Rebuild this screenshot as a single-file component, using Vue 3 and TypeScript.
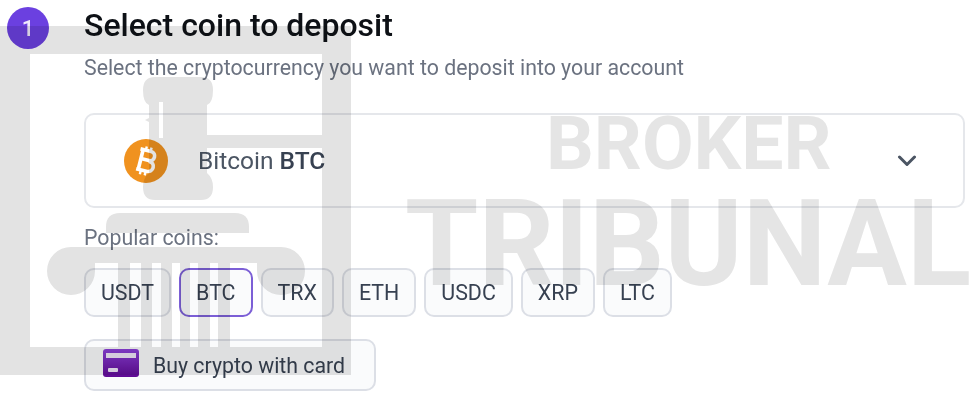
<script setup lang="ts">
const coins = ['USDT', 'BTC', 'TRX', 'ETH', 'USDC', 'XRP', 'LTC'];
const selected = 'BTC';
// columns of the courthouse in the watermark: [x, width]
const columns = [[118, 12], [141, 11], [161, 11], [180, 10], [198, 12], [218, 12]];
</script>

<template>
  <div class="page">
    <main class="content">
      <header class="step">
        <span class="badge">1</span>
        <div>
          <h1>Select coin to deposit</h1>
          <p class="hint">Select the cryptocurrency you want to deposit into your account</p>
        </div>
      </header>

      <div class="body">
        <div class="select">
          <svg class="coin" width="44" height="44" viewBox="0 0 44 44">
            <circle cx="22" cy="22" r="22" fill="#f0921f" />
            <g transform="rotate(14 22 22) translate(22 22) scale(1.1) translate(-22 -22)" fill="none" stroke="#fff">
              <path stroke-width="3.300" stroke-linejoin="round" d="M17 12.500H24.500C30 12.500 30 21 24.500 21H17M24.500 21.500C31.500 21.500 31.500 31 24.500 31H15M17 12.500V31M14.500 12.500H18" />
              <path stroke-width="2.200" d="M19.500 9V12.500M24 9V12.500M19.500 31V35M24 31V35" />
            </g>
          </svg>
          <span class="coin-name">Bitcoin <b>BTC</b></span>
          <svg class="chevron" width="20" height="12" viewBox="0 0 20 12">
            <path d="M2.500 2L10 9.500L17.500 2" fill="none" stroke="#4b5563" stroke-width="3" stroke-linecap="round" stroke-linejoin="round" />
          </svg>
        </div>

        <p class="popular">Popular coins:</p>
        <div class="chips">
          <button v-for="coin in coins" :key="coin" :class="['chip', { active: coin === selected }]">{{ coin }}</button>
        </div>

        <button class="buy">
          <svg class="card" width="36" height="28" viewBox="0 0 36 28">
            <defs>
              <linearGradient id="card" x1="0" y1="0" x2="0" y2="1">
                <stop offset="0" stop-color="#8b3fd9" />
                <stop offset="1" stop-color="#5f0a94" />
              </linearGradient>
            </defs>
            <rect width="36" height="28" rx="3" fill="url(#card)" />
            <rect x="3" y="4" width="30" height="5" fill="#efe6f8" />
            <rect x="5" y="19" width="10" height="4" rx="1" fill="#efe6f8" />
          </svg>
          <span>Buy crypto with card</span>
        </button>
      </div>
    </main>

    <svg class="watermark" width="974" height="402" viewBox="0 0 974 402" aria-hidden="true">
      <g fill="#e3e3e3">
        <path fill-rule="evenodd" d="M0 26H351V375H0ZM30 54V347H322V54Z" />
        <rect x="207" y="135" width="115" height="13" />
        <path fill-rule="evenodd" d="M155 77H201Q213 77 213 90Q213 103 207 105V173Q213 178 213 187Q213 200 201 200H155Q143 200 143 187Q143 178 149 173V122L145 120L149 118V105Q143 103 143 90Q143 77 155 77ZM159 102V138H163V102Z" />
        <path d="M120 213H235Q249 213 249 227V233H106V227Q106 213 120 213Z" />
        <path d="M71 247H281A24 24 0 1 1 257 271V263H95V271A24 24 0 1 1 71 247Z" />
        <rect v-for="col in columns" :key="col[0]" :x="col[0]" y="263" :width="col[1]" height="112" />
      </g>
      <text x="546" y="169" class="wm-text wm-small">BROKER</text>
      <text x="405" y="285" class="wm-text wm-large" textLength="566" lengthAdjust="spacingAndGlyphs">TRIBUNAL</text>
    </svg>
  </div>
</template>

<style>
body {
  background: #fff;
}
</style>

<style scoped>
.page {
  position: relative;
  width: 974px;
  height: 402px;
  overflow: hidden;
  background: #fff;
  font-family: Roboto, "Liberation Sans", sans-serif;
  filter: blur(0.4px);
}

.watermark {
  position: absolute;
  left: 0;
  top: 0;
  mix-blend-mode: multiply;
  pointer-events: none;
}

.wm-text {
  font-family: Roboto, "Liberation Sans", sans-serif;
  font-weight: 700;
  fill: #e5e5e5;
}

.wm-small {
  font-size: 75px;
}

.wm-large {
  font-size: 120px;
}

.content {
  padding: 7px 9px 0 7px;
}

.step {
  display: flex;
  gap: 35px;
}

.badge {
  flex: none;
  width: 42px;
  height: 42px;
  border-radius: 50%;
  background: #6b40e0;
  color: #eee9fc;
  font-size: 22px;
  font-weight: 500;
  display: flex;
  align-items: center;
  justify-content: center;
}

h1 {
  margin: 0;
  font-size: 32px;
  line-height: 36px;
  font-weight: 500;
  color: #0e1116;
}

.hint {
  margin: 12px 0 0;
  font-size: 21.300px;
  line-height: 26px;
  color: #6b7280;
}

.body {
  margin: 32px 0 0 77px;
}

.select {
  height: 95px;
  box-sizing: border-box;
  padding: 0 46px 0 38px;
  display: flex;
  align-items: center;
  border: 2px solid #e5e7eb;
  border-radius: 10px;
}

.coin {
  flex: none;
}

.coin-name {
  margin-left: 30px;
  font-size: 24.500px;
  color: #4b5563;
}

.coin-name b {
  font-weight: 500;
  color: #374151;
}

.chevron {
  margin-left: auto;
}

.popular {
  margin: 17px 0 0;
  font-size: 21.300px;
  line-height: 26px;
  color: #6b7280;
}

.chips {
  display: flex;
  gap: 8px;
  margin-top: 17px;
}

.chip {
  height: 49px;
  padding: 0 15px;
  border: 2px solid #dcdfe6;
  border-radius: 10px;
  background: #fafbfc;
  font: 400 21.400px Roboto, "Liberation Sans", sans-serif;
  color: #374151;
}

.chip.active {
  border-color: #7c5fd6;
}

.buy {
  display: flex;
  align-items: center;
  gap: 14px;
  width: 292px;
  height: 52px;
  margin-top: 22px;
  padding: 0 0 0 17px;
  border: 2px solid #dcdfe6;
  border-radius: 10px;
  background: #fafbfc;
  font: 400 21.300px Roboto, "Liberation Sans", sans-serif;
  color: #374151;
}

.card {
  margin-bottom: 4px;
}
</style>
